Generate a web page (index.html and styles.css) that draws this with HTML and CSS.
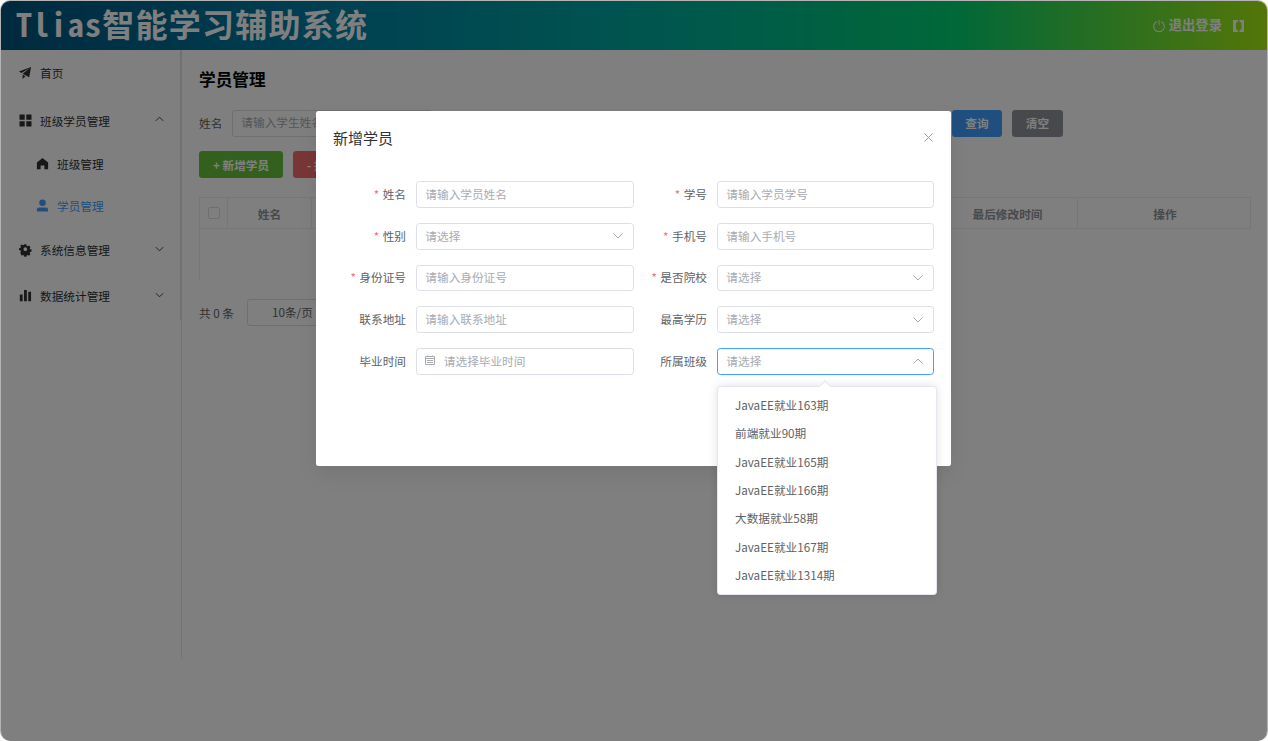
FILE: index.html
```html
<!DOCTYPE html>
<html lang="zh-CN">
<head>
<meta charset="utf-8">
<title>Tlias智能学习辅助系统</title>
<link rel="stylesheet" href="styles.css">
</head>
<body>
<div class="window">
  <header class="topbar">
    <span class="brand">Tlias智能学习辅助系统</span>
    <div class="top-actions">
      <svg class="power" viewBox="0 0 1024 1024"><path d="M352 159.872V230.4a352 352 0 1 0 320 0v-70.528A416.128 416.128 0 0 1 512 960a416 416 0 0 1-160-800.128z"/><path d="M512 64q32 0 32 32v320q0 32-32 32t-32-32V96q0-32 32-32z"/></svg>
      <span class="logout">退出登录</span>
      <svg class="pass" viewBox="0 0 11 12"><path d="M0 0h5v1.500l-2 1.500v6l2 1.500V12H0z"/><path d="M11 0H6.500v1.500l2 1.500v6l-2 1.500V12H11z"/></svg>
    </div>
  </header>
  <div class="layout">
    <aside class="aside">
      <nav class="menu">
        <a class="menu-row row-home">
          <svg class="mi" viewBox="-64 0 1024 1024"><path d="m64 448 832-320-128 704-446.080-243.200L832 192 242.816 545.472 64 448zm256 512V657.024L512 768 320 960z"/></svg>首页
        </a>
        <a class="menu-row row-class">
          <svg class="mi" viewBox="-2.500 -1.500 15 15"><path d="M0 0h5.200v5.200H0zM6.800 0H12v5.200H6.800zM0 6.800h5.200V12H0zM6.800 6.800H12V12H6.800z"/></svg>班级学员管理
          <svg class="chev" viewBox="0 0 10 6"><path d="M1 5l4-4 4 4"/></svg>
        </a>
        <a class="menu-row sub">
          <svg class="mi" viewBox="0 0 1024 1024"><path d="M512 128 128 447.936V896h255.936V640H640v256h255.936V447.936z"/></svg>班级管理
        </a>
        <a class="menu-row sub active">
          <svg class="mi" viewBox="0 0 1024 1024"><path d="M288 320a224 224 0 1 0 448 0 224 224 0 1 0-448 0zm544 608H160a32 32 0 0 1-32-32v-96a160 160 0 0 1 160-160h448a160 160 0 0 1 160 160v96a32 32 0 0 1-32 32z"/></svg>学员管理
        </a>
        <a class="menu-row row-group">
          <svg class="mi" viewBox="-3 -2 18 18"><path d="M5.800.8h2.400l.4 1.700 1.300.6 1.500-.9 1.700 1.700-.9 1.500.6 1.300 1.700.4v2.400l-1.700.4-.6 1.300.9 1.500-1.700 1.700-1.500-.9-1.300.6-.4 1.700H5.800l-.4-1.700-1.300-.6-1.500.9L.9 11l.9-1.500-.6-1.300L-.5 7.800V5.400l1.700-.4.6-1.300-.9-1.500L2.600 1l1.500.9 1.300-.6zM7 4.400a2.200 2.200 0 1 0 0 4.400 2.200 2.200 0 0 0 0-4.400z" fill-rule="evenodd"/></svg>系统信息管理
          <svg class="chev" viewBox="0 0 10 6"><path d="M1 1l4 4 4-4"/></svg>
        </a>
        <a class="menu-row row-group">
          <svg class="mi" viewBox="-64 0 1024 1024"><path d="M416 896V128h192v768H416zm-288 0V448h192v448H128zm576 0V256h192v640H704z"/></svg>数据统计管理
          <svg class="chev" viewBox="0 0 10 6"><path d="M1 1l4 4 4-4"/></svg>
        </a>
      </nav>
    </aside>
    <main class="main">
      <h1 class="page-title">学员管理</h1>
      <div class="search-row">
        <label class="search-label">姓名</label>
        <div class="search-input">请输入学生姓名</div>
        <button class="btn btn-blue">查询</button>
        <button class="btn btn-gray">清空</button>
      </div>
      <div class="action-row">
        <button class="btn btn-green btn-wide">+ 新增学员</button>
        <button class="btn btn-red btn-wide">- 批量删除</button>
      </div>
      <div class="table">
        <div class="thead">
          <div class="th th-check"><span class="checkbox"></span></div>
          <div class="th th-name">姓名</div>
          <div class="th th-fill"></div>
          <div class="th th-time">最后修改时间</div>
          <div class="th th-op">操作</div>
        </div>
        <div class="tbody-empty"></div>
      </div>
      <div class="pager">
        <span class="pager-total">共 0 条</span>
        <div class="pager-select">10条/页</div>
      </div>
    </main>
  </div>

  <div class="overlay"></div>

  <section class="modal">
    <h2 class="modal-title">新增学员</h2>
    <svg class="modal-close" viewBox="0 0 10 10"><path d="M.5.5l9 9M9.500.5l-9 9"/></svg>
    <form class="form">
      <label class="f-label"><i>*</i>姓名</label>
      <div class="field ph">请输入学员姓名</div>
      <label class="f-label"><i>*</i>学号</label>
      <div class="field ph">请输入学员学号</div>

      <label class="f-label"><i>*</i>性别</label>
      <div class="field ph sel">请选择<svg class="f-chev" viewBox="0 0 10 6"><path d="M.5.5L5 5 9.500.5"/></svg></div>
      <label class="f-label"><i>*</i>手机号</label>
      <div class="field ph">请输入手机号</div>

      <label class="f-label"><i>*</i>身份证号</label>
      <div class="field ph">请输入身份证号</div>
      <label class="f-label"><i>*</i>是否院校</label>
      <div class="field ph sel">请选择<svg class="f-chev" viewBox="0 0 10 6"><path d="M.5.5L5 5 9.500.5"/></svg></div>

      <label class="f-label">联系地址</label>
      <div class="field ph">请输入联系地址</div>
      <label class="f-label">最高学历</label>
      <div class="field ph sel">请选择<svg class="f-chev" viewBox="0 0 10 6"><path d="M.5.5L5 5 9.500.5"/></svg></div>

      <label class="f-label">毕业时间</label>
      <div class="field ph date"><svg class="cal" viewBox="0 0 10 10"><path d="M.5 1.500h9v8h-9zM.5 3.500h9M2.500.5v1.500M7.500.5v1.500M2 5.500h6M2 7.500h6"/></svg>请选择毕业时间</div>
      <label class="f-label">所属班级</label>
      <div class="field ph sel focus">请选择<svg class="f-chev" viewBox="0 0 10 6"><path d="M.5 5.500L5 1l4.500 4.500"/></svg></div>
    </form>
  </section>

  <div class="dropdown">
    <span class="dd-arrow"></span>
    <ul class="dd-list">
      <li>JavaEE就业163期</li>
      <li>前端就业90期</li>
      <li>JavaEE就业165期</li>
      <li>JavaEE就业166期</li>
      <li>大数据就业58期</li>
      <li>JavaEE就业167期</li>
      <li>JavaEE就业1314期</li>
    </ul>
  </div>
</div>
</body>
</html>
```
FILE: styles.css
```css
* { box-sizing: border-box; }
html, body { margin: 0; padding: 0; background: #fff; }
body {
  font-family: "Noto Sans CJK SC", "Liberation Sans", sans-serif;
  font-size: 11.67px;
  color: #606266;
}
.window {
  position: relative;
  width: 1268px;
  height: 741px;
  border: 1px solid #b4b4b4;
  border-bottom: 0;
  border-radius: 10px;
  overflow: hidden;
  background: #fff;
}
.topbar {
  display: flex;
  align-items: center;
  justify-content: space-between;
  height: 49px;
  padding: 0 23px 0 15px;
  background: linear-gradient(to right, #00547d, #007fa4, #00aaa0, #00d072, #a8eb12);
}
.brand {
  font-family: "Noto Sans Mono CJK SC", "Noto Sans CJK SC", monospace;
  font-size: 32px;
  line-height: 40px;
  margin-bottom: 6px;
  font-weight: 700;
  letter-spacing: 1.25px;
  color: #fff;
  white-space: nowrap;
}
.top-actions { display: flex; align-items: center; color: #fff; }
.power { width: 14px; height: 14px; fill: #fff; margin-right: 3px; }
.logout { font-size: 13.33px; font-weight: 700; padding-bottom: 2px; }
.pass { width: 11px; height: 12px; fill: #fff; margin-left: 11px; }

.layout { display: flex; height: 608px; }
.aside { width: 181px; border-right: 1px solid #e6e6e6; flex: none; }
.menu { border-right: 1px solid #dcdfe6; height: 270px; display: flex; flex-direction: column; }
.menu-row { display: flex; align-items: center; padding-left: 16px; color: #303133; position: relative; }
.mi { width: 15px; height: 15px; fill: #303133; margin-right: 8px; flex: none; }
.row-home { height: 45px; }
.row-class { height: 47px; padding-top: 3px; }
.row-group { height: 46px; }
.sub { height: 42px; padding-left: 34px; }
.sub .mi { margin-right: 7px; }
.active { color: #409eff; }
.active .mi { fill: #409eff; }
.chev { position: absolute; left: 154px; top: 50%; width: 9px; height: 6px; margin-top: -3px; fill: none; stroke: #303133; stroke-width: 1; }

.main { flex: 1; padding: 19px 16px 0 17px; min-width: 0; }
.page-title { margin: 0 0 21px; font-size: 16.67px; line-height: 20px; font-weight: 700; color: #000; }
.search-row { display: flex; align-items: center; width: 864px; height: 26.67px; }
.search-label { width: 33px; color: #606266; flex: none; padding-bottom: 1px; }
.search-input {
  width: 200px;
  height: 26.67px;
  line-height: 22.67px;
  padding: 0 8.33px;
  border: 1px solid #dcdfe6;
  border-radius: 3px;
  color: #a8abb2;
  margin-right: auto;
}
.btn {
  height: 26.67px;
  padding: 0 0 2px;
  width: 50px;
  border: 0;
  border-radius: 3.33px;
  color: #fff;
  font: 700 11.67px "Noto Sans CJK SC", "Liberation Sans", sans-serif;
}
.btn + .btn { margin-left: 10px; }
.btn-blue { background: #409eff; }
.btn-gray { background: #909399; width: 51px; }
.btn-green { background: #67c23a; }
.btn-red { background: #f56c6c; }
.btn-wide { width: 84px; padding: 0 0 0 14px; text-align: left; white-space: nowrap; overflow: hidden; }
.action-row { display: flex; margin-top: 14.67px; }

.table { margin-top: 19px; }
.thead { display: flex; height: 32px; border: 1px solid #ebeef5; }
.th {
  display: flex;
  align-items: center;
  justify-content: center;
  padding-top: 1px;
  font-weight: 700;
  color: #909399;
  border-right: 1px solid #ebeef5;
}
.th-check { width: 28px; flex: none; padding-top: 0; }
.th-name { width: 84px; flex: none; }
.th-fill { flex: 1; }
.th-time { width: 140px; flex: none; }
.th-op { width: 172px; flex: none; border-right: 0; padding-left: 2px; }
.checkbox { width: 12px; height: 12px; border: 1px solid #dcdfe6; border-radius: 2px; background: #fff; }
.tbody-empty { height: 51px; border-left: 1px solid #ebeef5; }

.pager { display: flex; align-items: center; margin-top: 19px; height: 26.67px; color: #606266; }
.pager-total { width: 48px; flex: none; }
.pager-select {
  width: 100px;
  height: 26.67px;
  line-height: 24.67px;
  padding-left: 24px;
  border: 1px solid #dcdfe6;
  border-radius: 3px;
}

.overlay { position: absolute; inset: 0; background: rgba(0, 0, 0, .5); }

.modal {
  position: absolute;
  left: 315px;
  top: 110px;
  width: 635px;
  height: 355px;
  background: #fff;
  border-radius: 2.5px;
  box-shadow: 0 8px 20px rgba(0, 0, 0, .08);
}
.modal-title {
  margin: 0;
  padding: 17px 0 0 17px;
  font-size: 15px;
  line-height: 20px;
  font-weight: 400;
  color: #303133;
}
.modal-close { position: absolute; right: 18px; top: 22px; width: 9px; height: 9px; fill: none; stroke: #909399; stroke-width: 1; }
.form {
  display: grid;
  grid-template-columns: 90px 218px 63px 217px;
  grid-auto-rows: 26.67px;
  column-gap: 10px;
  row-gap: 15px;
  margin-top: 33.3px;
}
.f-label {
  display: flex;
  align-items: center;
  justify-content: flex-end;
  padding-bottom: 2px;
  white-space: nowrap;
  color: #606266;
}
.f-label i { font-style: normal; color: #f56c6c; margin-right: 3.5px; }
.field {
  position: relative;
  display: flex;
  align-items: center;
  padding: 0 8.33px 2px;
  border: 1px solid #dcdfe6;
  border-radius: 3.33px;
  background: #fff;
}
.ph { color: #a8abb2; }
.focus { border-color: #409eff; }
.f-chev { position: absolute; right: 10px; top: 50%; width: 10px; height: 6px; margin-top: -3px; fill: none; stroke: #a8abb2; stroke-width: 1; }
.cal { width: 10px; height: 10px; margin-right: 8.500px; fill: none; stroke: #a8abb2; stroke-width: 1; flex: none; }

.dropdown {
  position: absolute;
  left: 716px;
  top: 385px;
  width: 220px;
  height: 209px;
  background: #fff;
  border: 1px solid #e4e7ed;
  border-radius: 3.33px;
  box-shadow: 0 0 10px rgba(0, 0, 0, .12);
}
.dd-arrow {
  position: absolute;
  left: 103px;
  top: -5px;
  width: 8px;
  height: 8px;
  background: #fff;
  border: 1px solid #e4e7ed;
  border-right-color: transparent;
  border-bottom-color: transparent;
  transform: rotate(45deg);
}
.dd-list { list-style: none; margin: 0; padding: 4px 0; }
.dd-list li {
  height: 28.33px;
  line-height: 28.33px;
  padding-left: 17px;
  color: #606266;
  white-space: nowrap;
}
```
